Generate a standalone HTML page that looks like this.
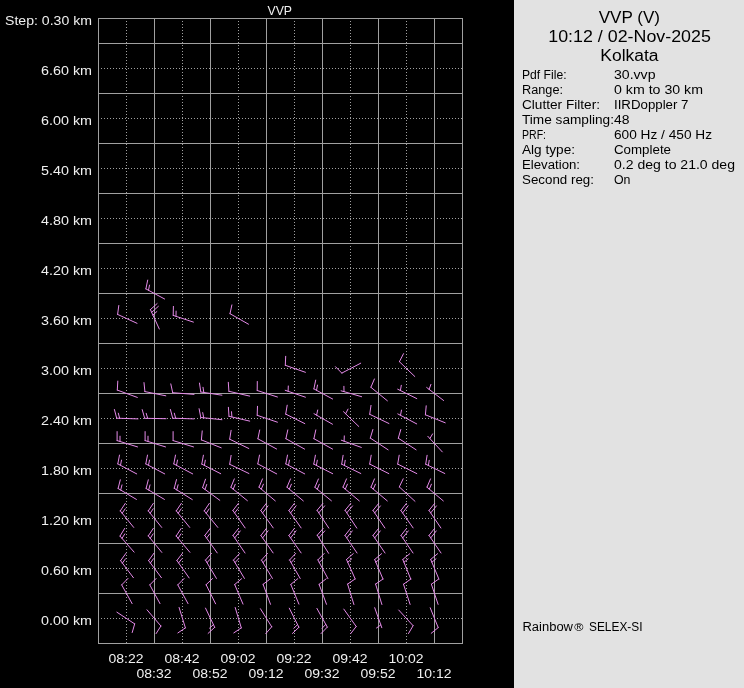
<!DOCTYPE html>
<html><head><meta charset="utf-8"><style>
html,body{margin:0;padding:0;background:#000;}
body{width:744px;height:688px;overflow:hidden;position:relative;}
svg{position:absolute;left:0;top:0;will-change:transform;}
text{font-family:"Liberation Sans",sans-serif;}
</style></head><body>
<svg width="744" height="688" viewBox="0 0 744 688">
<rect x="0" y="0" width="744" height="688" fill="#000"/>
<rect x="514" y="0" width="230" height="688" fill="#e2e2e2"/>
<path d="M98 18.5H463M98 43.5H463M98 93.5H463M98 143.5H463M98 193.5H463M98 243.5H463M98 293.5H463M98 343.5H463M98 393.5H463M98 443.5H463M98 493.5H463M98 543.5H463M98 593.5H463M98 643.5H463M98.5 18V644M154.5 18V644M210.5 18V644M266.5 18V644M322.5 18V644M378.5 18V644M434.5 18V644M462.5 18V644M462.5 18V644" stroke="#a0a0a0" stroke-width="1" fill="none" shape-rendering="crispEdges"/>
<path d="M101 68h1v1h-1zM104 68h1v1h-1zM107 68h1v1h-1zM110 68h1v1h-1zM113 68h1v1h-1zM116 68h1v1h-1zM119 68h1v1h-1zM122 68h1v1h-1zM125 68h1v1h-1zM128 68h1v1h-1zM131 68h1v1h-1zM134 68h1v1h-1zM137 68h1v1h-1zM140 68h1v1h-1zM143 68h1v1h-1zM146 68h1v1h-1zM149 68h1v1h-1zM152 68h1v1h-1zM155 68h1v1h-1zM158 68h1v1h-1zM161 68h1v1h-1zM164 68h1v1h-1zM167 68h1v1h-1zM170 68h1v1h-1zM173 68h1v1h-1zM176 68h1v1h-1zM179 68h1v1h-1zM182 68h1v1h-1zM185 68h1v1h-1zM188 68h1v1h-1zM191 68h1v1h-1zM194 68h1v1h-1zM197 68h1v1h-1zM200 68h1v1h-1zM203 68h1v1h-1zM206 68h1v1h-1zM209 68h1v1h-1zM212 68h1v1h-1zM215 68h1v1h-1zM218 68h1v1h-1zM221 68h1v1h-1zM224 68h1v1h-1zM227 68h1v1h-1zM230 68h1v1h-1zM233 68h1v1h-1zM236 68h1v1h-1zM239 68h1v1h-1zM242 68h1v1h-1zM245 68h1v1h-1zM248 68h1v1h-1zM251 68h1v1h-1zM254 68h1v1h-1zM257 68h1v1h-1zM260 68h1v1h-1zM263 68h1v1h-1zM266 68h1v1h-1zM269 68h1v1h-1zM272 68h1v1h-1zM275 68h1v1h-1zM278 68h1v1h-1zM281 68h1v1h-1zM284 68h1v1h-1zM287 68h1v1h-1zM290 68h1v1h-1zM293 68h1v1h-1zM296 68h1v1h-1zM299 68h1v1h-1zM302 68h1v1h-1zM305 68h1v1h-1zM308 68h1v1h-1zM311 68h1v1h-1zM314 68h1v1h-1zM317 68h1v1h-1zM320 68h1v1h-1zM323 68h1v1h-1zM326 68h1v1h-1zM329 68h1v1h-1zM332 68h1v1h-1zM335 68h1v1h-1zM338 68h1v1h-1zM341 68h1v1h-1zM344 68h1v1h-1zM347 68h1v1h-1zM350 68h1v1h-1zM353 68h1v1h-1zM356 68h1v1h-1zM359 68h1v1h-1zM362 68h1v1h-1zM365 68h1v1h-1zM368 68h1v1h-1zM371 68h1v1h-1zM374 68h1v1h-1zM377 68h1v1h-1zM380 68h1v1h-1zM383 68h1v1h-1zM386 68h1v1h-1zM389 68h1v1h-1zM392 68h1v1h-1zM395 68h1v1h-1zM398 68h1v1h-1zM401 68h1v1h-1zM404 68h1v1h-1zM407 68h1v1h-1zM410 68h1v1h-1zM413 68h1v1h-1zM416 68h1v1h-1zM419 68h1v1h-1zM422 68h1v1h-1zM425 68h1v1h-1zM428 68h1v1h-1zM431 68h1v1h-1zM434 68h1v1h-1zM437 68h1v1h-1zM440 68h1v1h-1zM443 68h1v1h-1zM446 68h1v1h-1zM449 68h1v1h-1zM452 68h1v1h-1zM455 68h1v1h-1zM458 68h1v1h-1zM461 68h1v1h-1zM101 118h1v1h-1zM104 118h1v1h-1zM107 118h1v1h-1zM110 118h1v1h-1zM113 118h1v1h-1zM116 118h1v1h-1zM119 118h1v1h-1zM122 118h1v1h-1zM125 118h1v1h-1zM128 118h1v1h-1zM131 118h1v1h-1zM134 118h1v1h-1zM137 118h1v1h-1zM140 118h1v1h-1zM143 118h1v1h-1zM146 118h1v1h-1zM149 118h1v1h-1zM152 118h1v1h-1zM155 118h1v1h-1zM158 118h1v1h-1zM161 118h1v1h-1zM164 118h1v1h-1zM167 118h1v1h-1zM170 118h1v1h-1zM173 118h1v1h-1zM176 118h1v1h-1zM179 118h1v1h-1zM182 118h1v1h-1zM185 118h1v1h-1zM188 118h1v1h-1zM191 118h1v1h-1zM194 118h1v1h-1zM197 118h1v1h-1zM200 118h1v1h-1zM203 118h1v1h-1zM206 118h1v1h-1zM209 118h1v1h-1zM212 118h1v1h-1zM215 118h1v1h-1zM218 118h1v1h-1zM221 118h1v1h-1zM224 118h1v1h-1zM227 118h1v1h-1zM230 118h1v1h-1zM233 118h1v1h-1zM236 118h1v1h-1zM239 118h1v1h-1zM242 118h1v1h-1zM245 118h1v1h-1zM248 118h1v1h-1zM251 118h1v1h-1zM254 118h1v1h-1zM257 118h1v1h-1zM260 118h1v1h-1zM263 118h1v1h-1zM266 118h1v1h-1zM269 118h1v1h-1zM272 118h1v1h-1zM275 118h1v1h-1zM278 118h1v1h-1zM281 118h1v1h-1zM284 118h1v1h-1zM287 118h1v1h-1zM290 118h1v1h-1zM293 118h1v1h-1zM296 118h1v1h-1zM299 118h1v1h-1zM302 118h1v1h-1zM305 118h1v1h-1zM308 118h1v1h-1zM311 118h1v1h-1zM314 118h1v1h-1zM317 118h1v1h-1zM320 118h1v1h-1zM323 118h1v1h-1zM326 118h1v1h-1zM329 118h1v1h-1zM332 118h1v1h-1zM335 118h1v1h-1zM338 118h1v1h-1zM341 118h1v1h-1zM344 118h1v1h-1zM347 118h1v1h-1zM350 118h1v1h-1zM353 118h1v1h-1zM356 118h1v1h-1zM359 118h1v1h-1zM362 118h1v1h-1zM365 118h1v1h-1zM368 118h1v1h-1zM371 118h1v1h-1zM374 118h1v1h-1zM377 118h1v1h-1zM380 118h1v1h-1zM383 118h1v1h-1zM386 118h1v1h-1zM389 118h1v1h-1zM392 118h1v1h-1zM395 118h1v1h-1zM398 118h1v1h-1zM401 118h1v1h-1zM404 118h1v1h-1zM407 118h1v1h-1zM410 118h1v1h-1zM413 118h1v1h-1zM416 118h1v1h-1zM419 118h1v1h-1zM422 118h1v1h-1zM425 118h1v1h-1zM428 118h1v1h-1zM431 118h1v1h-1zM434 118h1v1h-1zM437 118h1v1h-1zM440 118h1v1h-1zM443 118h1v1h-1zM446 118h1v1h-1zM449 118h1v1h-1zM452 118h1v1h-1zM455 118h1v1h-1zM458 118h1v1h-1zM461 118h1v1h-1zM101 168h1v1h-1zM104 168h1v1h-1zM107 168h1v1h-1zM110 168h1v1h-1zM113 168h1v1h-1zM116 168h1v1h-1zM119 168h1v1h-1zM122 168h1v1h-1zM125 168h1v1h-1zM128 168h1v1h-1zM131 168h1v1h-1zM134 168h1v1h-1zM137 168h1v1h-1zM140 168h1v1h-1zM143 168h1v1h-1zM146 168h1v1h-1zM149 168h1v1h-1zM152 168h1v1h-1zM155 168h1v1h-1zM158 168h1v1h-1zM161 168h1v1h-1zM164 168h1v1h-1zM167 168h1v1h-1zM170 168h1v1h-1zM173 168h1v1h-1zM176 168h1v1h-1zM179 168h1v1h-1zM182 168h1v1h-1zM185 168h1v1h-1zM188 168h1v1h-1zM191 168h1v1h-1zM194 168h1v1h-1zM197 168h1v1h-1zM200 168h1v1h-1zM203 168h1v1h-1zM206 168h1v1h-1zM209 168h1v1h-1zM212 168h1v1h-1zM215 168h1v1h-1zM218 168h1v1h-1zM221 168h1v1h-1zM224 168h1v1h-1zM227 168h1v1h-1zM230 168h1v1h-1zM233 168h1v1h-1zM236 168h1v1h-1zM239 168h1v1h-1zM242 168h1v1h-1zM245 168h1v1h-1zM248 168h1v1h-1zM251 168h1v1h-1zM254 168h1v1h-1zM257 168h1v1h-1zM260 168h1v1h-1zM263 168h1v1h-1zM266 168h1v1h-1zM269 168h1v1h-1zM272 168h1v1h-1zM275 168h1v1h-1zM278 168h1v1h-1zM281 168h1v1h-1zM284 168h1v1h-1zM287 168h1v1h-1zM290 168h1v1h-1zM293 168h1v1h-1zM296 168h1v1h-1zM299 168h1v1h-1zM302 168h1v1h-1zM305 168h1v1h-1zM308 168h1v1h-1zM311 168h1v1h-1zM314 168h1v1h-1zM317 168h1v1h-1zM320 168h1v1h-1zM323 168h1v1h-1zM326 168h1v1h-1zM329 168h1v1h-1zM332 168h1v1h-1zM335 168h1v1h-1zM338 168h1v1h-1zM341 168h1v1h-1zM344 168h1v1h-1zM347 168h1v1h-1zM350 168h1v1h-1zM353 168h1v1h-1zM356 168h1v1h-1zM359 168h1v1h-1zM362 168h1v1h-1zM365 168h1v1h-1zM368 168h1v1h-1zM371 168h1v1h-1zM374 168h1v1h-1zM377 168h1v1h-1zM380 168h1v1h-1zM383 168h1v1h-1zM386 168h1v1h-1zM389 168h1v1h-1zM392 168h1v1h-1zM395 168h1v1h-1zM398 168h1v1h-1zM401 168h1v1h-1zM404 168h1v1h-1zM407 168h1v1h-1zM410 168h1v1h-1zM413 168h1v1h-1zM416 168h1v1h-1zM419 168h1v1h-1zM422 168h1v1h-1zM425 168h1v1h-1zM428 168h1v1h-1zM431 168h1v1h-1zM434 168h1v1h-1zM437 168h1v1h-1zM440 168h1v1h-1zM443 168h1v1h-1zM446 168h1v1h-1zM449 168h1v1h-1zM452 168h1v1h-1zM455 168h1v1h-1zM458 168h1v1h-1zM461 168h1v1h-1zM101 218h1v1h-1zM104 218h1v1h-1zM107 218h1v1h-1zM110 218h1v1h-1zM113 218h1v1h-1zM116 218h1v1h-1zM119 218h1v1h-1zM122 218h1v1h-1zM125 218h1v1h-1zM128 218h1v1h-1zM131 218h1v1h-1zM134 218h1v1h-1zM137 218h1v1h-1zM140 218h1v1h-1zM143 218h1v1h-1zM146 218h1v1h-1zM149 218h1v1h-1zM152 218h1v1h-1zM155 218h1v1h-1zM158 218h1v1h-1zM161 218h1v1h-1zM164 218h1v1h-1zM167 218h1v1h-1zM170 218h1v1h-1zM173 218h1v1h-1zM176 218h1v1h-1zM179 218h1v1h-1zM182 218h1v1h-1zM185 218h1v1h-1zM188 218h1v1h-1zM191 218h1v1h-1zM194 218h1v1h-1zM197 218h1v1h-1zM200 218h1v1h-1zM203 218h1v1h-1zM206 218h1v1h-1zM209 218h1v1h-1zM212 218h1v1h-1zM215 218h1v1h-1zM218 218h1v1h-1zM221 218h1v1h-1zM224 218h1v1h-1zM227 218h1v1h-1zM230 218h1v1h-1zM233 218h1v1h-1zM236 218h1v1h-1zM239 218h1v1h-1zM242 218h1v1h-1zM245 218h1v1h-1zM248 218h1v1h-1zM251 218h1v1h-1zM254 218h1v1h-1zM257 218h1v1h-1zM260 218h1v1h-1zM263 218h1v1h-1zM266 218h1v1h-1zM269 218h1v1h-1zM272 218h1v1h-1zM275 218h1v1h-1zM278 218h1v1h-1zM281 218h1v1h-1zM284 218h1v1h-1zM287 218h1v1h-1zM290 218h1v1h-1zM293 218h1v1h-1zM296 218h1v1h-1zM299 218h1v1h-1zM302 218h1v1h-1zM305 218h1v1h-1zM308 218h1v1h-1zM311 218h1v1h-1zM314 218h1v1h-1zM317 218h1v1h-1zM320 218h1v1h-1zM323 218h1v1h-1zM326 218h1v1h-1zM329 218h1v1h-1zM332 218h1v1h-1zM335 218h1v1h-1zM338 218h1v1h-1zM341 218h1v1h-1zM344 218h1v1h-1zM347 218h1v1h-1zM350 218h1v1h-1zM353 218h1v1h-1zM356 218h1v1h-1zM359 218h1v1h-1zM362 218h1v1h-1zM365 218h1v1h-1zM368 218h1v1h-1zM371 218h1v1h-1zM374 218h1v1h-1zM377 218h1v1h-1zM380 218h1v1h-1zM383 218h1v1h-1zM386 218h1v1h-1zM389 218h1v1h-1zM392 218h1v1h-1zM395 218h1v1h-1zM398 218h1v1h-1zM401 218h1v1h-1zM404 218h1v1h-1zM407 218h1v1h-1zM410 218h1v1h-1zM413 218h1v1h-1zM416 218h1v1h-1zM419 218h1v1h-1zM422 218h1v1h-1zM425 218h1v1h-1zM428 218h1v1h-1zM431 218h1v1h-1zM434 218h1v1h-1zM437 218h1v1h-1zM440 218h1v1h-1zM443 218h1v1h-1zM446 218h1v1h-1zM449 218h1v1h-1zM452 218h1v1h-1zM455 218h1v1h-1zM458 218h1v1h-1zM461 218h1v1h-1zM101 268h1v1h-1zM104 268h1v1h-1zM107 268h1v1h-1zM110 268h1v1h-1zM113 268h1v1h-1zM116 268h1v1h-1zM119 268h1v1h-1zM122 268h1v1h-1zM125 268h1v1h-1zM128 268h1v1h-1zM131 268h1v1h-1zM134 268h1v1h-1zM137 268h1v1h-1zM140 268h1v1h-1zM143 268h1v1h-1zM146 268h1v1h-1zM149 268h1v1h-1zM152 268h1v1h-1zM155 268h1v1h-1zM158 268h1v1h-1zM161 268h1v1h-1zM164 268h1v1h-1zM167 268h1v1h-1zM170 268h1v1h-1zM173 268h1v1h-1zM176 268h1v1h-1zM179 268h1v1h-1zM182 268h1v1h-1zM185 268h1v1h-1zM188 268h1v1h-1zM191 268h1v1h-1zM194 268h1v1h-1zM197 268h1v1h-1zM200 268h1v1h-1zM203 268h1v1h-1zM206 268h1v1h-1zM209 268h1v1h-1zM212 268h1v1h-1zM215 268h1v1h-1zM218 268h1v1h-1zM221 268h1v1h-1zM224 268h1v1h-1zM227 268h1v1h-1zM230 268h1v1h-1zM233 268h1v1h-1zM236 268h1v1h-1zM239 268h1v1h-1zM242 268h1v1h-1zM245 268h1v1h-1zM248 268h1v1h-1zM251 268h1v1h-1zM254 268h1v1h-1zM257 268h1v1h-1zM260 268h1v1h-1zM263 268h1v1h-1zM266 268h1v1h-1zM269 268h1v1h-1zM272 268h1v1h-1zM275 268h1v1h-1zM278 268h1v1h-1zM281 268h1v1h-1zM284 268h1v1h-1zM287 268h1v1h-1zM290 268h1v1h-1zM293 268h1v1h-1zM296 268h1v1h-1zM299 268h1v1h-1zM302 268h1v1h-1zM305 268h1v1h-1zM308 268h1v1h-1zM311 268h1v1h-1zM314 268h1v1h-1zM317 268h1v1h-1zM320 268h1v1h-1zM323 268h1v1h-1zM326 268h1v1h-1zM329 268h1v1h-1zM332 268h1v1h-1zM335 268h1v1h-1zM338 268h1v1h-1zM341 268h1v1h-1zM344 268h1v1h-1zM347 268h1v1h-1zM350 268h1v1h-1zM353 268h1v1h-1zM356 268h1v1h-1zM359 268h1v1h-1zM362 268h1v1h-1zM365 268h1v1h-1zM368 268h1v1h-1zM371 268h1v1h-1zM374 268h1v1h-1zM377 268h1v1h-1zM380 268h1v1h-1zM383 268h1v1h-1zM386 268h1v1h-1zM389 268h1v1h-1zM392 268h1v1h-1zM395 268h1v1h-1zM398 268h1v1h-1zM401 268h1v1h-1zM404 268h1v1h-1zM407 268h1v1h-1zM410 268h1v1h-1zM413 268h1v1h-1zM416 268h1v1h-1zM419 268h1v1h-1zM422 268h1v1h-1zM425 268h1v1h-1zM428 268h1v1h-1zM431 268h1v1h-1zM434 268h1v1h-1zM437 268h1v1h-1zM440 268h1v1h-1zM443 268h1v1h-1zM446 268h1v1h-1zM449 268h1v1h-1zM452 268h1v1h-1zM455 268h1v1h-1zM458 268h1v1h-1zM461 268h1v1h-1zM101 318h1v1h-1zM104 318h1v1h-1zM107 318h1v1h-1zM110 318h1v1h-1zM113 318h1v1h-1zM116 318h1v1h-1zM119 318h1v1h-1zM122 318h1v1h-1zM125 318h1v1h-1zM128 318h1v1h-1zM131 318h1v1h-1zM134 318h1v1h-1zM137 318h1v1h-1zM140 318h1v1h-1zM143 318h1v1h-1zM146 318h1v1h-1zM149 318h1v1h-1zM152 318h1v1h-1zM155 318h1v1h-1zM158 318h1v1h-1zM161 318h1v1h-1zM164 318h1v1h-1zM167 318h1v1h-1zM170 318h1v1h-1zM173 318h1v1h-1zM176 318h1v1h-1zM179 318h1v1h-1zM182 318h1v1h-1zM185 318h1v1h-1zM188 318h1v1h-1zM191 318h1v1h-1zM194 318h1v1h-1zM197 318h1v1h-1zM200 318h1v1h-1zM203 318h1v1h-1zM206 318h1v1h-1zM209 318h1v1h-1zM212 318h1v1h-1zM215 318h1v1h-1zM218 318h1v1h-1zM221 318h1v1h-1zM224 318h1v1h-1zM227 318h1v1h-1zM230 318h1v1h-1zM233 318h1v1h-1zM236 318h1v1h-1zM239 318h1v1h-1zM242 318h1v1h-1zM245 318h1v1h-1zM248 318h1v1h-1zM251 318h1v1h-1zM254 318h1v1h-1zM257 318h1v1h-1zM260 318h1v1h-1zM263 318h1v1h-1zM266 318h1v1h-1zM269 318h1v1h-1zM272 318h1v1h-1zM275 318h1v1h-1zM278 318h1v1h-1zM281 318h1v1h-1zM284 318h1v1h-1zM287 318h1v1h-1zM290 318h1v1h-1zM293 318h1v1h-1zM296 318h1v1h-1zM299 318h1v1h-1zM302 318h1v1h-1zM305 318h1v1h-1zM308 318h1v1h-1zM311 318h1v1h-1zM314 318h1v1h-1zM317 318h1v1h-1zM320 318h1v1h-1zM323 318h1v1h-1zM326 318h1v1h-1zM329 318h1v1h-1zM332 318h1v1h-1zM335 318h1v1h-1zM338 318h1v1h-1zM341 318h1v1h-1zM344 318h1v1h-1zM347 318h1v1h-1zM350 318h1v1h-1zM353 318h1v1h-1zM356 318h1v1h-1zM359 318h1v1h-1zM362 318h1v1h-1zM365 318h1v1h-1zM368 318h1v1h-1zM371 318h1v1h-1zM374 318h1v1h-1zM377 318h1v1h-1zM380 318h1v1h-1zM383 318h1v1h-1zM386 318h1v1h-1zM389 318h1v1h-1zM392 318h1v1h-1zM395 318h1v1h-1zM398 318h1v1h-1zM401 318h1v1h-1zM404 318h1v1h-1zM407 318h1v1h-1zM410 318h1v1h-1zM413 318h1v1h-1zM416 318h1v1h-1zM419 318h1v1h-1zM422 318h1v1h-1zM425 318h1v1h-1zM428 318h1v1h-1zM431 318h1v1h-1zM434 318h1v1h-1zM437 318h1v1h-1zM440 318h1v1h-1zM443 318h1v1h-1zM446 318h1v1h-1zM449 318h1v1h-1zM452 318h1v1h-1zM455 318h1v1h-1zM458 318h1v1h-1zM461 318h1v1h-1zM101 368h1v1h-1zM104 368h1v1h-1zM107 368h1v1h-1zM110 368h1v1h-1zM113 368h1v1h-1zM116 368h1v1h-1zM119 368h1v1h-1zM122 368h1v1h-1zM125 368h1v1h-1zM128 368h1v1h-1zM131 368h1v1h-1zM134 368h1v1h-1zM137 368h1v1h-1zM140 368h1v1h-1zM143 368h1v1h-1zM146 368h1v1h-1zM149 368h1v1h-1zM152 368h1v1h-1zM155 368h1v1h-1zM158 368h1v1h-1zM161 368h1v1h-1zM164 368h1v1h-1zM167 368h1v1h-1zM170 368h1v1h-1zM173 368h1v1h-1zM176 368h1v1h-1zM179 368h1v1h-1zM182 368h1v1h-1zM185 368h1v1h-1zM188 368h1v1h-1zM191 368h1v1h-1zM194 368h1v1h-1zM197 368h1v1h-1zM200 368h1v1h-1zM203 368h1v1h-1zM206 368h1v1h-1zM209 368h1v1h-1zM212 368h1v1h-1zM215 368h1v1h-1zM218 368h1v1h-1zM221 368h1v1h-1zM224 368h1v1h-1zM227 368h1v1h-1zM230 368h1v1h-1zM233 368h1v1h-1zM236 368h1v1h-1zM239 368h1v1h-1zM242 368h1v1h-1zM245 368h1v1h-1zM248 368h1v1h-1zM251 368h1v1h-1zM254 368h1v1h-1zM257 368h1v1h-1zM260 368h1v1h-1zM263 368h1v1h-1zM266 368h1v1h-1zM269 368h1v1h-1zM272 368h1v1h-1zM275 368h1v1h-1zM278 368h1v1h-1zM281 368h1v1h-1zM284 368h1v1h-1zM287 368h1v1h-1zM290 368h1v1h-1zM293 368h1v1h-1zM296 368h1v1h-1zM299 368h1v1h-1zM302 368h1v1h-1zM305 368h1v1h-1zM308 368h1v1h-1zM311 368h1v1h-1zM314 368h1v1h-1zM317 368h1v1h-1zM320 368h1v1h-1zM323 368h1v1h-1zM326 368h1v1h-1zM329 368h1v1h-1zM332 368h1v1h-1zM335 368h1v1h-1zM338 368h1v1h-1zM341 368h1v1h-1zM344 368h1v1h-1zM347 368h1v1h-1zM350 368h1v1h-1zM353 368h1v1h-1zM356 368h1v1h-1zM359 368h1v1h-1zM362 368h1v1h-1zM365 368h1v1h-1zM368 368h1v1h-1zM371 368h1v1h-1zM374 368h1v1h-1zM377 368h1v1h-1zM380 368h1v1h-1zM383 368h1v1h-1zM386 368h1v1h-1zM389 368h1v1h-1zM392 368h1v1h-1zM395 368h1v1h-1zM398 368h1v1h-1zM401 368h1v1h-1zM404 368h1v1h-1zM407 368h1v1h-1zM410 368h1v1h-1zM413 368h1v1h-1zM416 368h1v1h-1zM419 368h1v1h-1zM422 368h1v1h-1zM425 368h1v1h-1zM428 368h1v1h-1zM431 368h1v1h-1zM434 368h1v1h-1zM437 368h1v1h-1zM440 368h1v1h-1zM443 368h1v1h-1zM446 368h1v1h-1zM449 368h1v1h-1zM452 368h1v1h-1zM455 368h1v1h-1zM458 368h1v1h-1zM461 368h1v1h-1zM101 418h1v1h-1zM104 418h1v1h-1zM107 418h1v1h-1zM110 418h1v1h-1zM113 418h1v1h-1zM116 418h1v1h-1zM119 418h1v1h-1zM122 418h1v1h-1zM125 418h1v1h-1zM128 418h1v1h-1zM131 418h1v1h-1zM134 418h1v1h-1zM137 418h1v1h-1zM140 418h1v1h-1zM143 418h1v1h-1zM146 418h1v1h-1zM149 418h1v1h-1zM152 418h1v1h-1zM155 418h1v1h-1zM158 418h1v1h-1zM161 418h1v1h-1zM164 418h1v1h-1zM167 418h1v1h-1zM170 418h1v1h-1zM173 418h1v1h-1zM176 418h1v1h-1zM179 418h1v1h-1zM182 418h1v1h-1zM185 418h1v1h-1zM188 418h1v1h-1zM191 418h1v1h-1zM194 418h1v1h-1zM197 418h1v1h-1zM200 418h1v1h-1zM203 418h1v1h-1zM206 418h1v1h-1zM209 418h1v1h-1zM212 418h1v1h-1zM215 418h1v1h-1zM218 418h1v1h-1zM221 418h1v1h-1zM224 418h1v1h-1zM227 418h1v1h-1zM230 418h1v1h-1zM233 418h1v1h-1zM236 418h1v1h-1zM239 418h1v1h-1zM242 418h1v1h-1zM245 418h1v1h-1zM248 418h1v1h-1zM251 418h1v1h-1zM254 418h1v1h-1zM257 418h1v1h-1zM260 418h1v1h-1zM263 418h1v1h-1zM266 418h1v1h-1zM269 418h1v1h-1zM272 418h1v1h-1zM275 418h1v1h-1zM278 418h1v1h-1zM281 418h1v1h-1zM284 418h1v1h-1zM287 418h1v1h-1zM290 418h1v1h-1zM293 418h1v1h-1zM296 418h1v1h-1zM299 418h1v1h-1zM302 418h1v1h-1zM305 418h1v1h-1zM308 418h1v1h-1zM311 418h1v1h-1zM314 418h1v1h-1zM317 418h1v1h-1zM320 418h1v1h-1zM323 418h1v1h-1zM326 418h1v1h-1zM329 418h1v1h-1zM332 418h1v1h-1zM335 418h1v1h-1zM338 418h1v1h-1zM341 418h1v1h-1zM344 418h1v1h-1zM347 418h1v1h-1zM350 418h1v1h-1zM353 418h1v1h-1zM356 418h1v1h-1zM359 418h1v1h-1zM362 418h1v1h-1zM365 418h1v1h-1zM368 418h1v1h-1zM371 418h1v1h-1zM374 418h1v1h-1zM377 418h1v1h-1zM380 418h1v1h-1zM383 418h1v1h-1zM386 418h1v1h-1zM389 418h1v1h-1zM392 418h1v1h-1zM395 418h1v1h-1zM398 418h1v1h-1zM401 418h1v1h-1zM404 418h1v1h-1zM407 418h1v1h-1zM410 418h1v1h-1zM413 418h1v1h-1zM416 418h1v1h-1zM419 418h1v1h-1zM422 418h1v1h-1zM425 418h1v1h-1zM428 418h1v1h-1zM431 418h1v1h-1zM434 418h1v1h-1zM437 418h1v1h-1zM440 418h1v1h-1zM443 418h1v1h-1zM446 418h1v1h-1zM449 418h1v1h-1zM452 418h1v1h-1zM455 418h1v1h-1zM458 418h1v1h-1zM461 418h1v1h-1zM101 468h1v1h-1zM104 468h1v1h-1zM107 468h1v1h-1zM110 468h1v1h-1zM113 468h1v1h-1zM116 468h1v1h-1zM119 468h1v1h-1zM122 468h1v1h-1zM125 468h1v1h-1zM128 468h1v1h-1zM131 468h1v1h-1zM134 468h1v1h-1zM137 468h1v1h-1zM140 468h1v1h-1zM143 468h1v1h-1zM146 468h1v1h-1zM149 468h1v1h-1zM152 468h1v1h-1zM155 468h1v1h-1zM158 468h1v1h-1zM161 468h1v1h-1zM164 468h1v1h-1zM167 468h1v1h-1zM170 468h1v1h-1zM173 468h1v1h-1zM176 468h1v1h-1zM179 468h1v1h-1zM182 468h1v1h-1zM185 468h1v1h-1zM188 468h1v1h-1zM191 468h1v1h-1zM194 468h1v1h-1zM197 468h1v1h-1zM200 468h1v1h-1zM203 468h1v1h-1zM206 468h1v1h-1zM209 468h1v1h-1zM212 468h1v1h-1zM215 468h1v1h-1zM218 468h1v1h-1zM221 468h1v1h-1zM224 468h1v1h-1zM227 468h1v1h-1zM230 468h1v1h-1zM233 468h1v1h-1zM236 468h1v1h-1zM239 468h1v1h-1zM242 468h1v1h-1zM245 468h1v1h-1zM248 468h1v1h-1zM251 468h1v1h-1zM254 468h1v1h-1zM257 468h1v1h-1zM260 468h1v1h-1zM263 468h1v1h-1zM266 468h1v1h-1zM269 468h1v1h-1zM272 468h1v1h-1zM275 468h1v1h-1zM278 468h1v1h-1zM281 468h1v1h-1zM284 468h1v1h-1zM287 468h1v1h-1zM290 468h1v1h-1zM293 468h1v1h-1zM296 468h1v1h-1zM299 468h1v1h-1zM302 468h1v1h-1zM305 468h1v1h-1zM308 468h1v1h-1zM311 468h1v1h-1zM314 468h1v1h-1zM317 468h1v1h-1zM320 468h1v1h-1zM323 468h1v1h-1zM326 468h1v1h-1zM329 468h1v1h-1zM332 468h1v1h-1zM335 468h1v1h-1zM338 468h1v1h-1zM341 468h1v1h-1zM344 468h1v1h-1zM347 468h1v1h-1zM350 468h1v1h-1zM353 468h1v1h-1zM356 468h1v1h-1zM359 468h1v1h-1zM362 468h1v1h-1zM365 468h1v1h-1zM368 468h1v1h-1zM371 468h1v1h-1zM374 468h1v1h-1zM377 468h1v1h-1zM380 468h1v1h-1zM383 468h1v1h-1zM386 468h1v1h-1zM389 468h1v1h-1zM392 468h1v1h-1zM395 468h1v1h-1zM398 468h1v1h-1zM401 468h1v1h-1zM404 468h1v1h-1zM407 468h1v1h-1zM410 468h1v1h-1zM413 468h1v1h-1zM416 468h1v1h-1zM419 468h1v1h-1zM422 468h1v1h-1zM425 468h1v1h-1zM428 468h1v1h-1zM431 468h1v1h-1zM434 468h1v1h-1zM437 468h1v1h-1zM440 468h1v1h-1zM443 468h1v1h-1zM446 468h1v1h-1zM449 468h1v1h-1zM452 468h1v1h-1zM455 468h1v1h-1zM458 468h1v1h-1zM461 468h1v1h-1zM101 518h1v1h-1zM104 518h1v1h-1zM107 518h1v1h-1zM110 518h1v1h-1zM113 518h1v1h-1zM116 518h1v1h-1zM119 518h1v1h-1zM122 518h1v1h-1zM125 518h1v1h-1zM128 518h1v1h-1zM131 518h1v1h-1zM134 518h1v1h-1zM137 518h1v1h-1zM140 518h1v1h-1zM143 518h1v1h-1zM146 518h1v1h-1zM149 518h1v1h-1zM152 518h1v1h-1zM155 518h1v1h-1zM158 518h1v1h-1zM161 518h1v1h-1zM164 518h1v1h-1zM167 518h1v1h-1zM170 518h1v1h-1zM173 518h1v1h-1zM176 518h1v1h-1zM179 518h1v1h-1zM182 518h1v1h-1zM185 518h1v1h-1zM188 518h1v1h-1zM191 518h1v1h-1zM194 518h1v1h-1zM197 518h1v1h-1zM200 518h1v1h-1zM203 518h1v1h-1zM206 518h1v1h-1zM209 518h1v1h-1zM212 518h1v1h-1zM215 518h1v1h-1zM218 518h1v1h-1zM221 518h1v1h-1zM224 518h1v1h-1zM227 518h1v1h-1zM230 518h1v1h-1zM233 518h1v1h-1zM236 518h1v1h-1zM239 518h1v1h-1zM242 518h1v1h-1zM245 518h1v1h-1zM248 518h1v1h-1zM251 518h1v1h-1zM254 518h1v1h-1zM257 518h1v1h-1zM260 518h1v1h-1zM263 518h1v1h-1zM266 518h1v1h-1zM269 518h1v1h-1zM272 518h1v1h-1zM275 518h1v1h-1zM278 518h1v1h-1zM281 518h1v1h-1zM284 518h1v1h-1zM287 518h1v1h-1zM290 518h1v1h-1zM293 518h1v1h-1zM296 518h1v1h-1zM299 518h1v1h-1zM302 518h1v1h-1zM305 518h1v1h-1zM308 518h1v1h-1zM311 518h1v1h-1zM314 518h1v1h-1zM317 518h1v1h-1zM320 518h1v1h-1zM323 518h1v1h-1zM326 518h1v1h-1zM329 518h1v1h-1zM332 518h1v1h-1zM335 518h1v1h-1zM338 518h1v1h-1zM341 518h1v1h-1zM344 518h1v1h-1zM347 518h1v1h-1zM350 518h1v1h-1zM353 518h1v1h-1zM356 518h1v1h-1zM359 518h1v1h-1zM362 518h1v1h-1zM365 518h1v1h-1zM368 518h1v1h-1zM371 518h1v1h-1zM374 518h1v1h-1zM377 518h1v1h-1zM380 518h1v1h-1zM383 518h1v1h-1zM386 518h1v1h-1zM389 518h1v1h-1zM392 518h1v1h-1zM395 518h1v1h-1zM398 518h1v1h-1zM401 518h1v1h-1zM404 518h1v1h-1zM407 518h1v1h-1zM410 518h1v1h-1zM413 518h1v1h-1zM416 518h1v1h-1zM419 518h1v1h-1zM422 518h1v1h-1zM425 518h1v1h-1zM428 518h1v1h-1zM431 518h1v1h-1zM434 518h1v1h-1zM437 518h1v1h-1zM440 518h1v1h-1zM443 518h1v1h-1zM446 518h1v1h-1zM449 518h1v1h-1zM452 518h1v1h-1zM455 518h1v1h-1zM458 518h1v1h-1zM461 518h1v1h-1zM101 568h1v1h-1zM104 568h1v1h-1zM107 568h1v1h-1zM110 568h1v1h-1zM113 568h1v1h-1zM116 568h1v1h-1zM119 568h1v1h-1zM122 568h1v1h-1zM125 568h1v1h-1zM128 568h1v1h-1zM131 568h1v1h-1zM134 568h1v1h-1zM137 568h1v1h-1zM140 568h1v1h-1zM143 568h1v1h-1zM146 568h1v1h-1zM149 568h1v1h-1zM152 568h1v1h-1zM155 568h1v1h-1zM158 568h1v1h-1zM161 568h1v1h-1zM164 568h1v1h-1zM167 568h1v1h-1zM170 568h1v1h-1zM173 568h1v1h-1zM176 568h1v1h-1zM179 568h1v1h-1zM182 568h1v1h-1zM185 568h1v1h-1zM188 568h1v1h-1zM191 568h1v1h-1zM194 568h1v1h-1zM197 568h1v1h-1zM200 568h1v1h-1zM203 568h1v1h-1zM206 568h1v1h-1zM209 568h1v1h-1zM212 568h1v1h-1zM215 568h1v1h-1zM218 568h1v1h-1zM221 568h1v1h-1zM224 568h1v1h-1zM227 568h1v1h-1zM230 568h1v1h-1zM233 568h1v1h-1zM236 568h1v1h-1zM239 568h1v1h-1zM242 568h1v1h-1zM245 568h1v1h-1zM248 568h1v1h-1zM251 568h1v1h-1zM254 568h1v1h-1zM257 568h1v1h-1zM260 568h1v1h-1zM263 568h1v1h-1zM266 568h1v1h-1zM269 568h1v1h-1zM272 568h1v1h-1zM275 568h1v1h-1zM278 568h1v1h-1zM281 568h1v1h-1zM284 568h1v1h-1zM287 568h1v1h-1zM290 568h1v1h-1zM293 568h1v1h-1zM296 568h1v1h-1zM299 568h1v1h-1zM302 568h1v1h-1zM305 568h1v1h-1zM308 568h1v1h-1zM311 568h1v1h-1zM314 568h1v1h-1zM317 568h1v1h-1zM320 568h1v1h-1zM323 568h1v1h-1zM326 568h1v1h-1zM329 568h1v1h-1zM332 568h1v1h-1zM335 568h1v1h-1zM338 568h1v1h-1zM341 568h1v1h-1zM344 568h1v1h-1zM347 568h1v1h-1zM350 568h1v1h-1zM353 568h1v1h-1zM356 568h1v1h-1zM359 568h1v1h-1zM362 568h1v1h-1zM365 568h1v1h-1zM368 568h1v1h-1zM371 568h1v1h-1zM374 568h1v1h-1zM377 568h1v1h-1zM380 568h1v1h-1zM383 568h1v1h-1zM386 568h1v1h-1zM389 568h1v1h-1zM392 568h1v1h-1zM395 568h1v1h-1zM398 568h1v1h-1zM401 568h1v1h-1zM404 568h1v1h-1zM407 568h1v1h-1zM410 568h1v1h-1zM413 568h1v1h-1zM416 568h1v1h-1zM419 568h1v1h-1zM422 568h1v1h-1zM425 568h1v1h-1zM428 568h1v1h-1zM431 568h1v1h-1zM434 568h1v1h-1zM437 568h1v1h-1zM440 568h1v1h-1zM443 568h1v1h-1zM446 568h1v1h-1zM449 568h1v1h-1zM452 568h1v1h-1zM455 568h1v1h-1zM458 568h1v1h-1zM461 568h1v1h-1zM101 618h1v1h-1zM104 618h1v1h-1zM107 618h1v1h-1zM110 618h1v1h-1zM113 618h1v1h-1zM116 618h1v1h-1zM119 618h1v1h-1zM122 618h1v1h-1zM125 618h1v1h-1zM128 618h1v1h-1zM131 618h1v1h-1zM134 618h1v1h-1zM137 618h1v1h-1zM140 618h1v1h-1zM143 618h1v1h-1zM146 618h1v1h-1zM149 618h1v1h-1zM152 618h1v1h-1zM155 618h1v1h-1zM158 618h1v1h-1zM161 618h1v1h-1zM164 618h1v1h-1zM167 618h1v1h-1zM170 618h1v1h-1zM173 618h1v1h-1zM176 618h1v1h-1zM179 618h1v1h-1zM182 618h1v1h-1zM185 618h1v1h-1zM188 618h1v1h-1zM191 618h1v1h-1zM194 618h1v1h-1zM197 618h1v1h-1zM200 618h1v1h-1zM203 618h1v1h-1zM206 618h1v1h-1zM209 618h1v1h-1zM212 618h1v1h-1zM215 618h1v1h-1zM218 618h1v1h-1zM221 618h1v1h-1zM224 618h1v1h-1zM227 618h1v1h-1zM230 618h1v1h-1zM233 618h1v1h-1zM236 618h1v1h-1zM239 618h1v1h-1zM242 618h1v1h-1zM245 618h1v1h-1zM248 618h1v1h-1zM251 618h1v1h-1zM254 618h1v1h-1zM257 618h1v1h-1zM260 618h1v1h-1zM263 618h1v1h-1zM266 618h1v1h-1zM269 618h1v1h-1zM272 618h1v1h-1zM275 618h1v1h-1zM278 618h1v1h-1zM281 618h1v1h-1zM284 618h1v1h-1zM287 618h1v1h-1zM290 618h1v1h-1zM293 618h1v1h-1zM296 618h1v1h-1zM299 618h1v1h-1zM302 618h1v1h-1zM305 618h1v1h-1zM308 618h1v1h-1zM311 618h1v1h-1zM314 618h1v1h-1zM317 618h1v1h-1zM320 618h1v1h-1zM323 618h1v1h-1zM326 618h1v1h-1zM329 618h1v1h-1zM332 618h1v1h-1zM335 618h1v1h-1zM338 618h1v1h-1zM341 618h1v1h-1zM344 618h1v1h-1zM347 618h1v1h-1zM350 618h1v1h-1zM353 618h1v1h-1zM356 618h1v1h-1zM359 618h1v1h-1zM362 618h1v1h-1zM365 618h1v1h-1zM368 618h1v1h-1zM371 618h1v1h-1zM374 618h1v1h-1zM377 618h1v1h-1zM380 618h1v1h-1zM383 618h1v1h-1zM386 618h1v1h-1zM389 618h1v1h-1zM392 618h1v1h-1zM395 618h1v1h-1zM398 618h1v1h-1zM401 618h1v1h-1zM404 618h1v1h-1zM407 618h1v1h-1zM410 618h1v1h-1zM413 618h1v1h-1zM416 618h1v1h-1zM419 618h1v1h-1zM422 618h1v1h-1zM425 618h1v1h-1zM428 618h1v1h-1zM431 618h1v1h-1zM434 618h1v1h-1zM437 618h1v1h-1zM440 618h1v1h-1zM443 618h1v1h-1zM446 618h1v1h-1zM449 618h1v1h-1zM452 618h1v1h-1zM455 618h1v1h-1zM458 618h1v1h-1zM461 618h1v1h-1zM126 21h1v1h-1zM126 24h1v1h-1zM126 27h1v1h-1zM126 30h1v1h-1zM126 33h1v1h-1zM126 36h1v1h-1zM126 39h1v1h-1zM126 42h1v1h-1zM126 45h1v1h-1zM126 48h1v1h-1zM126 51h1v1h-1zM126 54h1v1h-1zM126 57h1v1h-1zM126 60h1v1h-1zM126 63h1v1h-1zM126 66h1v1h-1zM126 69h1v1h-1zM126 72h1v1h-1zM126 75h1v1h-1zM126 78h1v1h-1zM126 81h1v1h-1zM126 84h1v1h-1zM126 87h1v1h-1zM126 90h1v1h-1zM126 93h1v1h-1zM126 96h1v1h-1zM126 99h1v1h-1zM126 102h1v1h-1zM126 105h1v1h-1zM126 108h1v1h-1zM126 111h1v1h-1zM126 114h1v1h-1zM126 117h1v1h-1zM126 120h1v1h-1zM126 123h1v1h-1zM126 126h1v1h-1zM126 129h1v1h-1zM126 132h1v1h-1zM126 135h1v1h-1zM126 138h1v1h-1zM126 141h1v1h-1zM126 144h1v1h-1zM126 147h1v1h-1zM126 150h1v1h-1zM126 153h1v1h-1zM126 156h1v1h-1zM126 159h1v1h-1zM126 162h1v1h-1zM126 165h1v1h-1zM126 168h1v1h-1zM126 171h1v1h-1zM126 174h1v1h-1zM126 177h1v1h-1zM126 180h1v1h-1zM126 183h1v1h-1zM126 186h1v1h-1zM126 189h1v1h-1zM126 192h1v1h-1zM126 195h1v1h-1zM126 198h1v1h-1zM126 201h1v1h-1zM126 204h1v1h-1zM126 207h1v1h-1zM126 210h1v1h-1zM126 213h1v1h-1zM126 216h1v1h-1zM126 219h1v1h-1zM126 222h1v1h-1zM126 225h1v1h-1zM126 228h1v1h-1zM126 231h1v1h-1zM126 234h1v1h-1zM126 237h1v1h-1zM126 240h1v1h-1zM126 243h1v1h-1zM126 246h1v1h-1zM126 249h1v1h-1zM126 252h1v1h-1zM126 255h1v1h-1zM126 258h1v1h-1zM126 261h1v1h-1zM126 264h1v1h-1zM126 267h1v1h-1zM126 270h1v1h-1zM126 273h1v1h-1zM126 276h1v1h-1zM126 279h1v1h-1zM126 282h1v1h-1zM126 285h1v1h-1zM126 288h1v1h-1zM126 291h1v1h-1zM126 294h1v1h-1zM126 297h1v1h-1zM126 300h1v1h-1zM126 303h1v1h-1zM126 306h1v1h-1zM126 309h1v1h-1zM126 312h1v1h-1zM126 315h1v1h-1zM126 318h1v1h-1zM126 321h1v1h-1zM126 324h1v1h-1zM126 327h1v1h-1zM126 330h1v1h-1zM126 333h1v1h-1zM126 336h1v1h-1zM126 339h1v1h-1zM126 342h1v1h-1zM126 345h1v1h-1zM126 348h1v1h-1zM126 351h1v1h-1zM126 354h1v1h-1zM126 357h1v1h-1zM126 360h1v1h-1zM126 363h1v1h-1zM126 366h1v1h-1zM126 369h1v1h-1zM126 372h1v1h-1zM126 375h1v1h-1zM126 378h1v1h-1zM126 381h1v1h-1zM126 384h1v1h-1zM126 387h1v1h-1zM126 390h1v1h-1zM126 393h1v1h-1zM126 396h1v1h-1zM126 399h1v1h-1zM126 402h1v1h-1zM126 405h1v1h-1zM126 408h1v1h-1zM126 411h1v1h-1zM126 414h1v1h-1zM126 417h1v1h-1zM126 420h1v1h-1zM126 423h1v1h-1zM126 426h1v1h-1zM126 429h1v1h-1zM126 432h1v1h-1zM126 435h1v1h-1zM126 438h1v1h-1zM126 441h1v1h-1zM126 444h1v1h-1zM126 447h1v1h-1zM126 450h1v1h-1zM126 453h1v1h-1zM126 456h1v1h-1zM126 459h1v1h-1zM126 462h1v1h-1zM126 465h1v1h-1zM126 468h1v1h-1zM126 471h1v1h-1zM126 474h1v1h-1zM126 477h1v1h-1zM126 480h1v1h-1zM126 483h1v1h-1zM126 486h1v1h-1zM126 489h1v1h-1zM126 492h1v1h-1zM126 495h1v1h-1zM126 498h1v1h-1zM126 501h1v1h-1zM126 504h1v1h-1zM126 507h1v1h-1zM126 510h1v1h-1zM126 513h1v1h-1zM126 516h1v1h-1zM126 519h1v1h-1zM126 522h1v1h-1zM126 525h1v1h-1zM126 528h1v1h-1zM126 531h1v1h-1zM126 534h1v1h-1zM126 537h1v1h-1zM126 540h1v1h-1zM126 543h1v1h-1zM126 546h1v1h-1zM126 549h1v1h-1zM126 552h1v1h-1zM126 555h1v1h-1zM126 558h1v1h-1zM126 561h1v1h-1zM126 564h1v1h-1zM126 567h1v1h-1zM126 570h1v1h-1zM126 573h1v1h-1zM126 576h1v1h-1zM126 579h1v1h-1zM126 582h1v1h-1zM126 585h1v1h-1zM126 588h1v1h-1zM126 591h1v1h-1zM126 594h1v1h-1zM126 597h1v1h-1zM126 600h1v1h-1zM126 603h1v1h-1zM126 606h1v1h-1zM126 609h1v1h-1zM126 612h1v1h-1zM126 615h1v1h-1zM126 618h1v1h-1zM126 621h1v1h-1zM126 624h1v1h-1zM126 627h1v1h-1zM126 630h1v1h-1zM126 633h1v1h-1zM126 636h1v1h-1zM126 639h1v1h-1zM126 642h1v1h-1zM182 21h1v1h-1zM182 24h1v1h-1zM182 27h1v1h-1zM182 30h1v1h-1zM182 33h1v1h-1zM182 36h1v1h-1zM182 39h1v1h-1zM182 42h1v1h-1zM182 45h1v1h-1zM182 48h1v1h-1zM182 51h1v1h-1zM182 54h1v1h-1zM182 57h1v1h-1zM182 60h1v1h-1zM182 63h1v1h-1zM182 66h1v1h-1zM182 69h1v1h-1zM182 72h1v1h-1zM182 75h1v1h-1zM182 78h1v1h-1zM182 81h1v1h-1zM182 84h1v1h-1zM182 87h1v1h-1zM182 90h1v1h-1zM182 93h1v1h-1zM182 96h1v1h-1zM182 99h1v1h-1zM182 102h1v1h-1zM182 105h1v1h-1zM182 108h1v1h-1zM182 111h1v1h-1zM182 114h1v1h-1zM182 117h1v1h-1zM182 120h1v1h-1zM182 123h1v1h-1zM182 126h1v1h-1zM182 129h1v1h-1zM182 132h1v1h-1zM182 135h1v1h-1zM182 138h1v1h-1zM182 141h1v1h-1zM182 144h1v1h-1zM182 147h1v1h-1zM182 150h1v1h-1zM182 153h1v1h-1zM182 156h1v1h-1zM182 159h1v1h-1zM182 162h1v1h-1zM182 165h1v1h-1zM182 168h1v1h-1zM182 171h1v1h-1zM182 174h1v1h-1zM182 177h1v1h-1zM182 180h1v1h-1zM182 183h1v1h-1zM182 186h1v1h-1zM182 189h1v1h-1zM182 192h1v1h-1zM182 195h1v1h-1zM182 198h1v1h-1zM182 201h1v1h-1zM182 204h1v1h-1zM182 207h1v1h-1zM182 210h1v1h-1zM182 213h1v1h-1zM182 216h1v1h-1zM182 219h1v1h-1zM182 222h1v1h-1zM182 225h1v1h-1zM182 228h1v1h-1zM182 231h1v1h-1zM182 234h1v1h-1zM182 237h1v1h-1zM182 240h1v1h-1zM182 243h1v1h-1zM182 246h1v1h-1zM182 249h1v1h-1zM182 252h1v1h-1zM182 255h1v1h-1zM182 258h1v1h-1zM182 261h1v1h-1zM182 264h1v1h-1zM182 267h1v1h-1zM182 270h1v1h-1zM182 273h1v1h-1zM182 276h1v1h-1zM182 279h1v1h-1zM182 282h1v1h-1zM182 285h1v1h-1zM182 288h1v1h-1zM182 291h1v1h-1zM182 294h1v1h-1zM182 297h1v1h-1zM182 300h1v1h-1zM182 303h1v1h-1zM182 306h1v1h-1zM182 309h1v1h-1zM182 312h1v1h-1zM182 315h1v1h-1zM182 318h1v1h-1zM182 321h1v1h-1zM182 324h1v1h-1zM182 327h1v1h-1zM182 330h1v1h-1zM182 333h1v1h-1zM182 336h1v1h-1zM182 339h1v1h-1zM182 342h1v1h-1zM182 345h1v1h-1zM182 348h1v1h-1zM182 351h1v1h-1zM182 354h1v1h-1zM182 357h1v1h-1zM182 360h1v1h-1zM182 363h1v1h-1zM182 366h1v1h-1zM182 369h1v1h-1zM182 372h1v1h-1zM182 375h1v1h-1zM182 378h1v1h-1zM182 381h1v1h-1zM182 384h1v1h-1zM182 387h1v1h-1zM182 390h1v1h-1zM182 393h1v1h-1zM182 396h1v1h-1zM182 399h1v1h-1zM182 402h1v1h-1zM182 405h1v1h-1zM182 408h1v1h-1zM182 411h1v1h-1zM182 414h1v1h-1zM182 417h1v1h-1zM182 420h1v1h-1zM182 423h1v1h-1zM182 426h1v1h-1zM182 429h1v1h-1zM182 432h1v1h-1zM182 435h1v1h-1zM182 438h1v1h-1zM182 441h1v1h-1zM182 444h1v1h-1zM182 447h1v1h-1zM182 450h1v1h-1zM182 453h1v1h-1zM182 456h1v1h-1zM182 459h1v1h-1zM182 462h1v1h-1zM182 465h1v1h-1zM182 468h1v1h-1zM182 471h1v1h-1zM182 474h1v1h-1zM182 477h1v1h-1zM182 480h1v1h-1zM182 483h1v1h-1zM182 486h1v1h-1zM182 489h1v1h-1zM182 492h1v1h-1zM182 495h1v1h-1zM182 498h1v1h-1zM182 501h1v1h-1zM182 504h1v1h-1zM182 507h1v1h-1zM182 510h1v1h-1zM182 513h1v1h-1zM182 516h1v1h-1zM182 519h1v1h-1zM182 522h1v1h-1zM182 525h1v1h-1zM182 528h1v1h-1zM182 531h1v1h-1zM182 534h1v1h-1zM182 537h1v1h-1zM182 540h1v1h-1zM182 543h1v1h-1zM182 546h1v1h-1zM182 549h1v1h-1zM182 552h1v1h-1zM182 555h1v1h-1zM182 558h1v1h-1zM182 561h1v1h-1zM182 564h1v1h-1zM182 567h1v1h-1zM182 570h1v1h-1zM182 573h1v1h-1zM182 576h1v1h-1zM182 579h1v1h-1zM182 582h1v1h-1zM182 585h1v1h-1zM182 588h1v1h-1zM182 591h1v1h-1zM182 594h1v1h-1zM182 597h1v1h-1zM182 600h1v1h-1zM182 603h1v1h-1zM182 606h1v1h-1zM182 609h1v1h-1zM182 612h1v1h-1zM182 615h1v1h-1zM182 618h1v1h-1zM182 621h1v1h-1zM182 624h1v1h-1zM182 627h1v1h-1zM182 630h1v1h-1zM182 633h1v1h-1zM182 636h1v1h-1zM182 639h1v1h-1zM182 642h1v1h-1zM238 21h1v1h-1zM238 24h1v1h-1zM238 27h1v1h-1zM238 30h1v1h-1zM238 33h1v1h-1zM238 36h1v1h-1zM238 39h1v1h-1zM238 42h1v1h-1zM238 45h1v1h-1zM238 48h1v1h-1zM238 51h1v1h-1zM238 54h1v1h-1zM238 57h1v1h-1zM238 60h1v1h-1zM238 63h1v1h-1zM238 66h1v1h-1zM238 69h1v1h-1zM238 72h1v1h-1zM238 75h1v1h-1zM238 78h1v1h-1zM238 81h1v1h-1zM238 84h1v1h-1zM238 87h1v1h-1zM238 90h1v1h-1zM238 93h1v1h-1zM238 96h1v1h-1zM238 99h1v1h-1zM238 102h1v1h-1zM238 105h1v1h-1zM238 108h1v1h-1zM238 111h1v1h-1zM238 114h1v1h-1zM238 117h1v1h-1zM238 120h1v1h-1zM238 123h1v1h-1zM238 126h1v1h-1zM238 129h1v1h-1zM238 132h1v1h-1zM238 135h1v1h-1zM238 138h1v1h-1zM238 141h1v1h-1zM238 144h1v1h-1zM238 147h1v1h-1zM238 150h1v1h-1zM238 153h1v1h-1zM238 156h1v1h-1zM238 159h1v1h-1zM238 162h1v1h-1zM238 165h1v1h-1zM238 168h1v1h-1zM238 171h1v1h-1zM238 174h1v1h-1zM238 177h1v1h-1zM238 180h1v1h-1zM238 183h1v1h-1zM238 186h1v1h-1zM238 189h1v1h-1zM238 192h1v1h-1zM238 195h1v1h-1zM238 198h1v1h-1zM238 201h1v1h-1zM238 204h1v1h-1zM238 207h1v1h-1zM238 210h1v1h-1zM238 213h1v1h-1zM238 216h1v1h-1zM238 219h1v1h-1zM238 222h1v1h-1zM238 225h1v1h-1zM238 228h1v1h-1zM238 231h1v1h-1zM238 234h1v1h-1zM238 237h1v1h-1zM238 240h1v1h-1zM238 243h1v1h-1zM238 246h1v1h-1zM238 249h1v1h-1zM238 252h1v1h-1zM238 255h1v1h-1zM238 258h1v1h-1zM238 261h1v1h-1zM238 264h1v1h-1zM238 267h1v1h-1zM238 270h1v1h-1zM238 273h1v1h-1zM238 276h1v1h-1zM238 279h1v1h-1zM238 282h1v1h-1zM238 285h1v1h-1zM238 288h1v1h-1zM238 291h1v1h-1zM238 294h1v1h-1zM238 297h1v1h-1zM238 300h1v1h-1zM238 303h1v1h-1zM238 306h1v1h-1zM238 309h1v1h-1zM238 312h1v1h-1zM238 315h1v1h-1zM238 318h1v1h-1zM238 321h1v1h-1zM238 324h1v1h-1zM238 327h1v1h-1zM238 330h1v1h-1zM238 333h1v1h-1zM238 336h1v1h-1zM238 339h1v1h-1zM238 342h1v1h-1zM238 345h1v1h-1zM238 348h1v1h-1zM238 351h1v1h-1zM238 354h1v1h-1zM238 357h1v1h-1zM238 360h1v1h-1zM238 363h1v1h-1zM238 366h1v1h-1zM238 369h1v1h-1zM238 372h1v1h-1zM238 375h1v1h-1zM238 378h1v1h-1zM238 381h1v1h-1zM238 384h1v1h-1zM238 387h1v1h-1zM238 390h1v1h-1zM238 393h1v1h-1zM238 396h1v1h-1zM238 399h1v1h-1zM238 402h1v1h-1zM238 405h1v1h-1zM238 408h1v1h-1zM238 411h1v1h-1zM238 414h1v1h-1zM238 417h1v1h-1zM238 420h1v1h-1zM238 423h1v1h-1zM238 426h1v1h-1zM238 429h1v1h-1zM238 432h1v1h-1zM238 435h1v1h-1zM238 438h1v1h-1zM238 441h1v1h-1zM238 444h1v1h-1zM238 447h1v1h-1zM238 450h1v1h-1zM238 453h1v1h-1zM238 456h1v1h-1zM238 459h1v1h-1zM238 462h1v1h-1zM238 465h1v1h-1zM238 468h1v1h-1zM238 471h1v1h-1zM238 474h1v1h-1zM238 477h1v1h-1zM238 480h1v1h-1zM238 483h1v1h-1zM238 486h1v1h-1zM238 489h1v1h-1zM238 492h1v1h-1zM238 495h1v1h-1zM238 498h1v1h-1zM238 501h1v1h-1zM238 504h1v1h-1zM238 507h1v1h-1zM238 510h1v1h-1zM238 513h1v1h-1zM238 516h1v1h-1zM238 519h1v1h-1zM238 522h1v1h-1zM238 525h1v1h-1zM238 528h1v1h-1zM238 531h1v1h-1zM238 534h1v1h-1zM238 537h1v1h-1zM238 540h1v1h-1zM238 543h1v1h-1zM238 546h1v1h-1zM238 549h1v1h-1zM238 552h1v1h-1zM238 555h1v1h-1zM238 558h1v1h-1zM238 561h1v1h-1zM238 564h1v1h-1zM238 567h1v1h-1zM238 570h1v1h-1zM238 573h1v1h-1zM238 576h1v1h-1zM238 579h1v1h-1zM238 582h1v1h-1zM238 585h1v1h-1zM238 588h1v1h-1zM238 591h1v1h-1zM238 594h1v1h-1zM238 597h1v1h-1zM238 600h1v1h-1zM238 603h1v1h-1zM238 606h1v1h-1zM238 609h1v1h-1zM238 612h1v1h-1zM238 615h1v1h-1zM238 618h1v1h-1zM238 621h1v1h-1zM238 624h1v1h-1zM238 627h1v1h-1zM238 630h1v1h-1zM238 633h1v1h-1zM238 636h1v1h-1zM238 639h1v1h-1zM238 642h1v1h-1zM294 21h1v1h-1zM294 24h1v1h-1zM294 27h1v1h-1zM294 30h1v1h-1zM294 33h1v1h-1zM294 36h1v1h-1zM294 39h1v1h-1zM294 42h1v1h-1zM294 45h1v1h-1zM294 48h1v1h-1zM294 51h1v1h-1zM294 54h1v1h-1zM294 57h1v1h-1zM294 60h1v1h-1zM294 63h1v1h-1zM294 66h1v1h-1zM294 69h1v1h-1zM294 72h1v1h-1zM294 75h1v1h-1zM294 78h1v1h-1zM294 81h1v1h-1zM294 84h1v1h-1zM294 87h1v1h-1zM294 90h1v1h-1zM294 93h1v1h-1zM294 96h1v1h-1zM294 99h1v1h-1zM294 102h1v1h-1zM294 105h1v1h-1zM294 108h1v1h-1zM294 111h1v1h-1zM294 114h1v1h-1zM294 117h1v1h-1zM294 120h1v1h-1zM294 123h1v1h-1zM294 126h1v1h-1zM294 129h1v1h-1zM294 132h1v1h-1zM294 135h1v1h-1zM294 138h1v1h-1zM294 141h1v1h-1zM294 144h1v1h-1zM294 147h1v1h-1zM294 150h1v1h-1zM294 153h1v1h-1zM294 156h1v1h-1zM294 159h1v1h-1zM294 162h1v1h-1zM294 165h1v1h-1zM294 168h1v1h-1zM294 171h1v1h-1zM294 174h1v1h-1zM294 177h1v1h-1zM294 180h1v1h-1zM294 183h1v1h-1zM294 186h1v1h-1zM294 189h1v1h-1zM294 192h1v1h-1zM294 195h1v1h-1zM294 198h1v1h-1zM294 201h1v1h-1zM294 204h1v1h-1zM294 207h1v1h-1zM294 210h1v1h-1zM294 213h1v1h-1zM294 216h1v1h-1zM294 219h1v1h-1zM294 222h1v1h-1zM294 225h1v1h-1zM294 228h1v1h-1zM294 231h1v1h-1zM294 234h1v1h-1zM294 237h1v1h-1zM294 240h1v1h-1zM294 243h1v1h-1zM294 246h1v1h-1zM294 249h1v1h-1zM294 252h1v1h-1zM294 255h1v1h-1zM294 258h1v1h-1zM294 261h1v1h-1zM294 264h1v1h-1zM294 267h1v1h-1zM294 270h1v1h-1zM294 273h1v1h-1zM294 276h1v1h-1zM294 279h1v1h-1zM294 282h1v1h-1zM294 285h1v1h-1zM294 288h1v1h-1zM294 291h1v1h-1zM294 294h1v1h-1zM294 297h1v1h-1zM294 300h1v1h-1zM294 303h1v1h-1zM294 306h1v1h-1zM294 309h1v1h-1zM294 312h1v1h-1zM294 315h1v1h-1zM294 318h1v1h-1zM294 321h1v1h-1zM294 324h1v1h-1zM294 327h1v1h-1zM294 330h1v1h-1zM294 333h1v1h-1zM294 336h1v1h-1zM294 339h1v1h-1zM294 342h1v1h-1zM294 345h1v1h-1zM294 348h1v1h-1zM294 351h1v1h-1zM294 354h1v1h-1zM294 357h1v1h-1zM294 360h1v1h-1zM294 363h1v1h-1zM294 366h1v1h-1zM294 369h1v1h-1zM294 372h1v1h-1zM294 375h1v1h-1zM294 378h1v1h-1zM294 381h1v1h-1zM294 384h1v1h-1zM294 387h1v1h-1zM294 390h1v1h-1zM294 393h1v1h-1zM294 396h1v1h-1zM294 399h1v1h-1zM294 402h1v1h-1zM294 405h1v1h-1zM294 408h1v1h-1zM294 411h1v1h-1zM294 414h1v1h-1zM294 417h1v1h-1zM294 420h1v1h-1zM294 423h1v1h-1zM294 426h1v1h-1zM294 429h1v1h-1zM294 432h1v1h-1zM294 435h1v1h-1zM294 438h1v1h-1zM294 441h1v1h-1zM294 444h1v1h-1zM294 447h1v1h-1zM294 450h1v1h-1zM294 453h1v1h-1zM294 456h1v1h-1zM294 459h1v1h-1zM294 462h1v1h-1zM294 465h1v1h-1zM294 468h1v1h-1zM294 471h1v1h-1zM294 474h1v1h-1zM294 477h1v1h-1zM294 480h1v1h-1zM294 483h1v1h-1zM294 486h1v1h-1zM294 489h1v1h-1zM294 492h1v1h-1zM294 495h1v1h-1zM294 498h1v1h-1zM294 501h1v1h-1zM294 504h1v1h-1zM294 507h1v1h-1zM294 510h1v1h-1zM294 513h1v1h-1zM294 516h1v1h-1zM294 519h1v1h-1zM294 522h1v1h-1zM294 525h1v1h-1zM294 528h1v1h-1zM294 531h1v1h-1zM294 534h1v1h-1zM294 537h1v1h-1zM294 540h1v1h-1zM294 543h1v1h-1zM294 546h1v1h-1zM294 549h1v1h-1zM294 552h1v1h-1zM294 555h1v1h-1zM294 558h1v1h-1zM294 561h1v1h-1zM294 564h1v1h-1zM294 567h1v1h-1zM294 570h1v1h-1zM294 573h1v1h-1zM294 576h1v1h-1zM294 579h1v1h-1zM294 582h1v1h-1zM294 585h1v1h-1zM294 588h1v1h-1zM294 591h1v1h-1zM294 594h1v1h-1zM294 597h1v1h-1zM294 600h1v1h-1zM294 603h1v1h-1zM294 606h1v1h-1zM294 609h1v1h-1zM294 612h1v1h-1zM294 615h1v1h-1zM294 618h1v1h-1zM294 621h1v1h-1zM294 624h1v1h-1zM294 627h1v1h-1zM294 630h1v1h-1zM294 633h1v1h-1zM294 636h1v1h-1zM294 639h1v1h-1zM294 642h1v1h-1zM350 21h1v1h-1zM350 24h1v1h-1zM350 27h1v1h-1zM350 30h1v1h-1zM350 33h1v1h-1zM350 36h1v1h-1zM350 39h1v1h-1zM350 42h1v1h-1zM350 45h1v1h-1zM350 48h1v1h-1zM350 51h1v1h-1zM350 54h1v1h-1zM350 57h1v1h-1zM350 60h1v1h-1zM350 63h1v1h-1zM350 66h1v1h-1zM350 69h1v1h-1zM350 72h1v1h-1zM350 75h1v1h-1zM350 78h1v1h-1zM350 81h1v1h-1zM350 84h1v1h-1zM350 87h1v1h-1zM350 90h1v1h-1zM350 93h1v1h-1zM350 96h1v1h-1zM350 99h1v1h-1zM350 102h1v1h-1zM350 105h1v1h-1zM350 108h1v1h-1zM350 111h1v1h-1zM350 114h1v1h-1zM350 117h1v1h-1zM350 120h1v1h-1zM350 123h1v1h-1zM350 126h1v1h-1zM350 129h1v1h-1zM350 132h1v1h-1zM350 135h1v1h-1zM350 138h1v1h-1zM350 141h1v1h-1zM350 144h1v1h-1zM350 147h1v1h-1zM350 150h1v1h-1zM350 153h1v1h-1zM350 156h1v1h-1zM350 159h1v1h-1zM350 162h1v1h-1zM350 165h1v1h-1zM350 168h1v1h-1zM350 171h1v1h-1zM350 174h1v1h-1zM350 177h1v1h-1zM350 180h1v1h-1zM350 183h1v1h-1zM350 186h1v1h-1zM350 189h1v1h-1zM350 192h1v1h-1zM350 195h1v1h-1zM350 198h1v1h-1zM350 201h1v1h-1zM350 204h1v1h-1zM350 207h1v1h-1zM350 210h1v1h-1zM350 213h1v1h-1zM350 216h1v1h-1zM350 219h1v1h-1zM350 222h1v1h-1zM350 225h1v1h-1zM350 228h1v1h-1zM350 231h1v1h-1zM350 234h1v1h-1zM350 237h1v1h-1zM350 240h1v1h-1zM350 243h1v1h-1zM350 246h1v1h-1zM350 249h1v1h-1zM350 252h1v1h-1zM350 255h1v1h-1zM350 258h1v1h-1zM350 261h1v1h-1zM350 264h1v1h-1zM350 267h1v1h-1zM350 270h1v1h-1zM350 273h1v1h-1zM350 276h1v1h-1zM350 279h1v1h-1zM350 282h1v1h-1zM350 285h1v1h-1zM350 288h1v1h-1zM350 291h1v1h-1zM350 294h1v1h-1zM350 297h1v1h-1zM350 300h1v1h-1zM350 303h1v1h-1zM350 306h1v1h-1zM350 309h1v1h-1zM350 312h1v1h-1zM350 315h1v1h-1zM350 318h1v1h-1zM350 321h1v1h-1zM350 324h1v1h-1zM350 327h1v1h-1zM350 330h1v1h-1zM350 333h1v1h-1zM350 336h1v1h-1zM350 339h1v1h-1zM350 342h1v1h-1zM350 345h1v1h-1zM350 348h1v1h-1zM350 351h1v1h-1zM350 354h1v1h-1zM350 357h1v1h-1zM350 360h1v1h-1zM350 363h1v1h-1zM350 366h1v1h-1zM350 369h1v1h-1zM350 372h1v1h-1zM350 375h1v1h-1zM350 378h1v1h-1zM350 381h1v1h-1zM350 384h1v1h-1zM350 387h1v1h-1zM350 390h1v1h-1zM350 393h1v1h-1zM350 396h1v1h-1zM350 399h1v1h-1zM350 402h1v1h-1zM350 405h1v1h-1zM350 408h1v1h-1zM350 411h1v1h-1zM350 414h1v1h-1zM350 417h1v1h-1zM350 420h1v1h-1zM350 423h1v1h-1zM350 426h1v1h-1zM350 429h1v1h-1zM350 432h1v1h-1zM350 435h1v1h-1zM350 438h1v1h-1zM350 441h1v1h-1zM350 444h1v1h-1zM350 447h1v1h-1zM350 450h1v1h-1zM350 453h1v1h-1zM350 456h1v1h-1zM350 459h1v1h-1zM350 462h1v1h-1zM350 465h1v1h-1zM350 468h1v1h-1zM350 471h1v1h-1zM350 474h1v1h-1zM350 477h1v1h-1zM350 480h1v1h-1zM350 483h1v1h-1zM350 486h1v1h-1zM350 489h1v1h-1zM350 492h1v1h-1zM350 495h1v1h-1zM350 498h1v1h-1zM350 501h1v1h-1zM350 504h1v1h-1zM350 507h1v1h-1zM350 510h1v1h-1zM350 513h1v1h-1zM350 516h1v1h-1zM350 519h1v1h-1zM350 522h1v1h-1zM350 525h1v1h-1zM350 528h1v1h-1zM350 531h1v1h-1zM350 534h1v1h-1zM350 537h1v1h-1zM350 540h1v1h-1zM350 543h1v1h-1zM350 546h1v1h-1zM350 549h1v1h-1zM350 552h1v1h-1zM350 555h1v1h-1zM350 558h1v1h-1zM350 561h1v1h-1zM350 564h1v1h-1zM350 567h1v1h-1zM350 570h1v1h-1zM350 573h1v1h-1zM350 576h1v1h-1zM350 579h1v1h-1zM350 582h1v1h-1zM350 585h1v1h-1zM350 588h1v1h-1zM350 591h1v1h-1zM350 594h1v1h-1zM350 597h1v1h-1zM350 600h1v1h-1zM350 603h1v1h-1zM350 606h1v1h-1zM350 609h1v1h-1zM350 612h1v1h-1zM350 615h1v1h-1zM350 618h1v1h-1zM350 621h1v1h-1zM350 624h1v1h-1zM350 627h1v1h-1zM350 630h1v1h-1zM350 633h1v1h-1zM350 636h1v1h-1zM350 639h1v1h-1zM350 642h1v1h-1zM406 21h1v1h-1zM406 24h1v1h-1zM406 27h1v1h-1zM406 30h1v1h-1zM406 33h1v1h-1zM406 36h1v1h-1zM406 39h1v1h-1zM406 42h1v1h-1zM406 45h1v1h-1zM406 48h1v1h-1zM406 51h1v1h-1zM406 54h1v1h-1zM406 57h1v1h-1zM406 60h1v1h-1zM406 63h1v1h-1zM406 66h1v1h-1zM406 69h1v1h-1zM406 72h1v1h-1zM406 75h1v1h-1zM406 78h1v1h-1zM406 81h1v1h-1zM406 84h1v1h-1zM406 87h1v1h-1zM406 90h1v1h-1zM406 93h1v1h-1zM406 96h1v1h-1zM406 99h1v1h-1zM406 102h1v1h-1zM406 105h1v1h-1zM406 108h1v1h-1zM406 111h1v1h-1zM406 114h1v1h-1zM406 117h1v1h-1zM406 120h1v1h-1zM406 123h1v1h-1zM406 126h1v1h-1zM406 129h1v1h-1zM406 132h1v1h-1zM406 135h1v1h-1zM406 138h1v1h-1zM406 141h1v1h-1zM406 144h1v1h-1zM406 147h1v1h-1zM406 150h1v1h-1zM406 153h1v1h-1zM406 156h1v1h-1zM406 159h1v1h-1zM406 162h1v1h-1zM406 165h1v1h-1zM406 168h1v1h-1zM406 171h1v1h-1zM406 174h1v1h-1zM406 177h1v1h-1zM406 180h1v1h-1zM406 183h1v1h-1zM406 186h1v1h-1zM406 189h1v1h-1zM406 192h1v1h-1zM406 195h1v1h-1zM406 198h1v1h-1zM406 201h1v1h-1zM406 204h1v1h-1zM406 207h1v1h-1zM406 210h1v1h-1zM406 213h1v1h-1zM406 216h1v1h-1zM406 219h1v1h-1zM406 222h1v1h-1zM406 225h1v1h-1zM406 228h1v1h-1zM406 231h1v1h-1zM406 234h1v1h-1zM406 237h1v1h-1zM406 240h1v1h-1zM406 243h1v1h-1zM406 246h1v1h-1zM406 249h1v1h-1zM406 252h1v1h-1zM406 255h1v1h-1zM406 258h1v1h-1zM406 261h1v1h-1zM406 264h1v1h-1zM406 267h1v1h-1zM406 270h1v1h-1zM406 273h1v1h-1zM406 276h1v1h-1zM406 279h1v1h-1zM406 282h1v1h-1zM406 285h1v1h-1zM406 288h1v1h-1zM406 291h1v1h-1zM406 294h1v1h-1zM406 297h1v1h-1zM406 300h1v1h-1zM406 303h1v1h-1zM406 306h1v1h-1zM406 309h1v1h-1zM406 312h1v1h-1zM406 315h1v1h-1zM406 318h1v1h-1zM406 321h1v1h-1zM406 324h1v1h-1zM406 327h1v1h-1zM406 330h1v1h-1zM406 333h1v1h-1zM406 336h1v1h-1zM406 339h1v1h-1zM406 342h1v1h-1zM406 345h1v1h-1zM406 348h1v1h-1zM406 351h1v1h-1zM406 354h1v1h-1zM406 357h1v1h-1zM406 360h1v1h-1zM406 363h1v1h-1zM406 366h1v1h-1zM406 369h1v1h-1zM406 372h1v1h-1zM406 375h1v1h-1zM406 378h1v1h-1zM406 381h1v1h-1zM406 384h1v1h-1zM406 387h1v1h-1zM406 390h1v1h-1zM406 393h1v1h-1zM406 396h1v1h-1zM406 399h1v1h-1zM406 402h1v1h-1zM406 405h1v1h-1zM406 408h1v1h-1zM406 411h1v1h-1zM406 414h1v1h-1zM406 417h1v1h-1zM406 420h1v1h-1zM406 423h1v1h-1zM406 426h1v1h-1zM406 429h1v1h-1zM406 432h1v1h-1zM406 435h1v1h-1zM406 438h1v1h-1zM406 441h1v1h-1zM406 444h1v1h-1zM406 447h1v1h-1zM406 450h1v1h-1zM406 453h1v1h-1zM406 456h1v1h-1zM406 459h1v1h-1zM406 462h1v1h-1zM406 465h1v1h-1zM406 468h1v1h-1zM406 471h1v1h-1zM406 474h1v1h-1zM406 477h1v1h-1zM406 480h1v1h-1zM406 483h1v1h-1zM406 486h1v1h-1zM406 489h1v1h-1zM406 492h1v1h-1zM406 495h1v1h-1zM406 498h1v1h-1zM406 501h1v1h-1zM406 504h1v1h-1zM406 507h1v1h-1zM406 510h1v1h-1zM406 513h1v1h-1zM406 516h1v1h-1zM406 519h1v1h-1zM406 522h1v1h-1zM406 525h1v1h-1zM406 528h1v1h-1zM406 531h1v1h-1zM406 534h1v1h-1zM406 537h1v1h-1zM406 540h1v1h-1zM406 543h1v1h-1zM406 546h1v1h-1zM406 549h1v1h-1zM406 552h1v1h-1zM406 555h1v1h-1zM406 558h1v1h-1zM406 561h1v1h-1zM406 564h1v1h-1zM406 567h1v1h-1zM406 570h1v1h-1zM406 573h1v1h-1zM406 576h1v1h-1zM406 579h1v1h-1zM406 582h1v1h-1zM406 585h1v1h-1zM406 588h1v1h-1zM406 591h1v1h-1zM406 594h1v1h-1zM406 597h1v1h-1zM406 600h1v1h-1zM406 603h1v1h-1zM406 606h1v1h-1zM406 609h1v1h-1zM406 612h1v1h-1zM406 615h1v1h-1zM406 618h1v1h-1zM406 621h1v1h-1zM406 624h1v1h-1zM406 627h1v1h-1zM406 630h1v1h-1zM406 633h1v1h-1zM406 636h1v1h-1zM406 639h1v1h-1zM406 642h1v1h-1z" fill="#a0a0a0" shape-rendering="crispEdges"/>
<path d="M145.9 288.9L164.6 299.0M145.9 288.9l1.8 -8.8M148.5 290.3l1.0 -5.2M117.6 314.4L137.0 323.3M117.6 314.4l1.2 -8.9M150.4 309.6L159.3 329.0M150.4 309.6l6.7 -6.0M151.7 312.3l6.7 -6.0M152.9 315.0l4.0 -3.5M173.2 315.4L193.4 322.1M173.2 315.4l0.2 -9.0M176.0 316.4l0.1 -5.3M230.0 313.7L248.5 324.2M230.0 313.7l1.9 -8.8M285.3 365.3L305.4 372.3M285.3 365.3l0.4 -9.0M341.8 373.1L360.7 363.2M341.8 373.1l-6.3 -6.4M399.4 361.7L414.8 376.5M399.4 361.7l4.1 -8.0M117.3 390.1L137.3 397.4M117.3 390.1l0.5 -9.0M144.9 391.6L165.8 395.8M144.9 391.6l-0.9 -9.0M172.7 392.7L194.0 394.4M172.7 392.7l-1.9 -8.8M200.8 392.0L221.9 395.2M200.8 392.0l-1.3 -8.9M203.8 392.5l-0.8 -5.2M228.9 391.3L249.7 396.1M228.9 391.3l-0.6 -9.0M257.2 390.5L277.4 397.0M257.2 390.5l0.1 -9.0M285.2 390.3L305.4 397.2M288.1 391.3l0.2 -5.3M313.9 388.9L332.6 399.0M313.9 388.9l1.8 -8.8M316.5 390.3l1.0 -5.2M341.1 390.8L361.6 396.7M344.0 391.6l-0.1 -5.3M370.9 387.3L387.4 400.8M370.9 387.3l3.5 -8.3M397.7 389.2L416.8 398.6M400.4 390.5l0.9 -5.2M426.7 387.5L443.6 400.5M429.1 389.4l1.8 -5.0M116.7 418.2L138.0 418.9M116.7 418.2l-2.3 -8.7M119.7 418.3l-1.4 -5.1M144.7 418.3L166.0 418.7M144.7 418.3l-2.5 -8.7M147.7 418.4l-1.5 -5.1M172.7 418.2L194.0 418.9M172.7 418.2l-2.3 -8.7M175.7 418.3l-1.4 -5.1M200.8 417.5L221.9 419.7M200.8 417.5l-1.7 -8.8M203.7 417.8l-1.0 -5.2M229.0 416.3L249.7 421.1M229.0 416.3l-0.6 -9.0M231.9 417.0l-0.4 -5.3M257.2 415.3L277.4 422.2M257.2 415.3l0.3 -9.0M285.7 414.1L304.8 423.6M285.7 414.1l1.5 -8.9M314.0 413.7L332.5 424.2M316.6 415.2l1.1 -5.2M343.5 411.7L358.8 426.5M345.6 413.8l2.4 -4.7M369.7 414.3L388.9 423.5M369.7 414.3l1.3 -8.9M397.8 413.9L416.7 423.9M400.5 415.3l1.0 -5.2M425.4 414.8L445.2 422.8M425.4 414.8l0.8 -9.0M117.1 440.6L137.5 446.9M117.1 440.6l0.0 -9.0M120.0 441.5l0.0 -5.3M145.1 440.6L165.5 446.9M145.1 440.6l0.0 -9.0M148.0 441.5l0.0 -5.3M173.1 440.6L193.5 446.9M173.1 440.6l0.0 -9.0M201.4 439.9L221.2 447.8M201.4 439.9l0.8 -9.0M229.7 439.2L248.8 448.5M229.7 439.2l1.4 -8.9M257.9 438.8L276.6 449.0M257.9 438.8l1.8 -8.8M285.9 438.7L304.6 449.1M285.9 438.7l1.9 -8.8M313.9 438.7L332.6 449.1M313.9 438.7l1.9 -8.8M341.3 440.2L361.3 447.4M344.1 441.2l0.2 -5.3M370.3 438.1L388.1 449.8M370.3 438.1l2.6 -8.6M398.3 438.2L416.1 449.8M398.3 438.2l2.5 -8.7M427.8 436.3L442.3 451.9M429.9 438.5l2.7 -4.6M117.8 463.9L136.7 473.9M117.8 463.9l1.7 -8.8M120.5 465.3l1.0 -5.2M145.8 463.9L164.7 473.9M145.8 463.9l1.7 -8.8M148.5 465.3l1.0 -5.2M173.8 463.9L192.7 473.9M173.8 463.9l1.7 -8.8M176.5 465.3l1.0 -5.2M201.8 464.1L220.7 473.7M201.8 464.1l1.6 -8.9M204.4 465.4l0.9 -5.2M229.7 464.3L248.9 473.5M229.7 464.3l1.4 -8.9M257.8 463.9L276.7 473.9M257.8 463.9l1.7 -8.8M285.8 463.9L304.7 473.9M285.8 463.9l1.7 -8.8M288.5 465.3l1.0 -5.2M313.8 464.1L332.7 473.7M313.8 464.1l1.6 -8.9M316.4 465.4l0.9 -5.2M341.7 464.2L360.8 473.5M341.7 464.2l1.4 -8.9M344.4 465.5l0.8 -5.2M369.7 464.1L388.8 473.6M369.7 464.1l1.5 -8.9M397.7 464.1L416.8 473.6M397.7 464.1l1.5 -8.9M425.7 464.2L444.8 473.5M425.7 464.2l1.4 -8.9M428.4 465.5l0.8 -5.2M118.1 488.5L136.4 499.4M118.1 488.5l2.2 -8.7M120.7 490.0l1.3 -5.1M146.1 488.5L164.4 499.4M146.1 488.5l2.2 -8.7M148.7 490.0l1.3 -5.1M174.2 488.3L192.3 499.6M174.2 488.3l2.3 -8.7M176.7 489.9l1.4 -5.1M202.6 487.7L219.8 500.3M202.6 487.7l2.9 -8.5M205.0 489.5l1.7 -5.0M230.9 487.3L247.4 500.7M230.9 487.3l3.4 -8.4M233.2 489.2l2.0 -4.9M259.0 487.2L275.3 500.9M259.0 487.2l3.5 -8.3M261.3 489.1l2.1 -4.9M287.0 487.2L303.3 500.9M287.0 487.2l3.5 -8.3M289.3 489.1l2.1 -4.9M314.9 487.3L331.4 500.8M314.9 487.3l3.5 -8.3M317.3 489.2l2.0 -4.9M343.0 487.2L359.3 500.9M343.0 487.2l3.5 -8.3M345.3 489.1l2.1 -4.9M371.0 487.2L387.3 500.9M371.0 487.2l3.5 -8.3M373.3 489.1l2.1 -4.9M399.3 486.9L415.0 501.3M399.3 486.9l3.9 -8.1M427.0 487.2L443.3 500.9M427.0 487.2l3.5 -8.3M429.3 489.1l2.1 -4.9M120.3 510.9L133.7 527.4M120.3 510.9l5.0 -7.5M122.2 513.2l3.0 -4.4M148.3 510.9L161.7 527.4M148.3 510.9l5.0 -7.5M150.2 513.2l3.0 -4.4M176.3 510.9L189.7 527.4M176.3 510.9l5.0 -7.5M178.2 513.2l3.0 -4.4M204.3 510.9L217.8 527.4M204.3 510.9l5.0 -7.5M206.2 513.3l2.9 -4.4M232.9 510.5L245.1 527.9M232.9 510.5l5.5 -7.1M234.6 512.9l3.3 -4.2M260.8 510.5L273.2 527.9M260.8 510.5l5.5 -7.1M262.5 513.0l5.5 -7.1M288.9 510.5L301.1 527.9M288.9 510.5l5.5 -7.1M290.6 512.9l5.5 -7.1M317.1 510.3L328.8 528.1M317.1 510.3l5.8 -6.9M318.8 512.8l5.8 -6.9M345.1 510.3L356.8 528.1M345.1 510.3l5.7 -6.9M346.8 512.8l5.7 -6.9M373.0 510.4L384.9 528.0M373.0 510.4l5.7 -7.0M374.7 512.9l5.7 -7.0M400.9 510.5L413.1 527.9M400.9 510.5l5.5 -7.1M402.6 512.9l5.5 -7.1M429.0 510.4L440.9 528.0M429.0 510.4l5.7 -7.0M430.7 512.9l5.7 -7.0M120.0 536.1L134.1 552.1M120.0 536.1l4.7 -7.7M122.0 538.4l2.8 -4.5M148.3 535.9L161.8 552.4M148.3 535.9l5.0 -7.5M150.2 538.3l2.9 -4.4M176.2 536.0L189.9 552.3M176.2 536.0l4.9 -7.5M178.1 538.3l2.9 -4.4M204.8 535.5L217.2 552.9M204.8 535.5l5.5 -7.1M206.6 538.0l3.2 -4.2M233.0 535.4L245.0 553.0M233.0 535.4l5.6 -7.0M234.7 537.9l5.6 -7.0M260.9 535.5L273.1 552.9M260.9 535.5l5.5 -7.1M262.6 537.9l5.5 -7.1M288.9 535.5L301.1 552.9M288.9 535.5l5.5 -7.1M290.6 537.9l5.5 -7.1M317.3 535.2L328.6 553.3M317.3 535.2l5.9 -6.8M318.9 537.7l5.9 -6.8M345.0 535.4L357.0 553.0M345.0 535.4l5.6 -7.0M346.7 537.9l5.6 -7.0M373.0 535.4L385.0 553.0M373.0 535.4l5.6 -7.0M374.7 537.9l5.6 -7.0M401.0 535.4L413.0 553.0M401.0 535.4l5.6 -7.0M402.7 537.9l5.6 -7.0M429.0 535.4L441.0 553.0M429.0 535.4l5.6 -7.0M430.7 537.9l5.6 -7.0M120.6 560.7L133.4 577.7M120.6 560.7l5.3 -7.3M122.4 563.1l3.1 -4.3M148.6 560.6L161.4 577.7M148.6 560.6l5.3 -7.3M150.4 563.0l3.1 -4.3M176.9 560.5L189.1 577.9M176.9 560.5l5.5 -7.1M178.6 562.9l3.3 -4.2M205.5 560.1L216.4 578.4M205.5 560.1l6.0 -6.7M207.0 562.7l3.5 -3.9M233.5 560.1L244.4 578.4M233.5 560.1l6.1 -6.6M235.0 562.6l3.6 -3.9M261.5 560.1L272.4 578.4M261.5 560.1l6.0 -6.7M263.0 562.7l3.5 -3.9M289.6 560.0L300.2 578.5M289.6 560.0l6.1 -6.6M291.1 562.6l3.6 -3.9M317.9 559.9L327.9 578.6M317.9 559.9l6.3 -6.4M319.3 562.5l3.7 -3.8M346.5 559.5L355.2 579.0M346.5 559.5l6.8 -5.9M347.7 562.3l4.0 -3.5M374.7 559.5L383.0 579.1M374.7 559.5l6.9 -5.8M375.8 562.2l4.1 -3.4M402.8 559.4L410.8 579.2M402.8 559.4l7.0 -5.7M404.0 562.2l4.1 -3.3M430.7 559.4L438.9 579.1M430.7 559.4l6.9 -5.7M431.9 562.2l4.1 -3.4M121.7 584.9L132.1 603.6M121.7 584.9l6.3 -6.5M149.8 584.9L160.0 603.6M149.8 584.9l6.3 -6.4M177.8 584.9L188.0 603.6M177.8 584.9l6.3 -6.4M206.1 584.7L215.6 603.8M206.1 584.7l6.5 -6.2M234.7 584.5L243.0 604.1M234.7 584.5l6.9 -5.8M263.1 584.3L270.5 604.3M263.1 584.3l7.2 -5.4M290.8 584.4L298.9 604.1M290.8 584.4l7.0 -5.7M319.1 584.3L326.5 604.3M319.1 584.3l7.1 -5.5M347.6 584.1L353.9 604.5M347.6 584.1l7.4 -5.1M375.6 584.1L381.9 604.5M375.6 584.1l7.4 -5.1M403.5 584.2L410.1 604.4M403.5 584.2l7.4 -5.2M431.4 584.2L438.1 604.4M431.4 584.2l7.3 -5.2M134.7 623.9L116.9 612.2M134.7 623.9l-2.5 8.6M160.9 626.0L147.0 609.8M160.9 626.0l-4.8 7.6M185.4 627.9L179.1 607.5M185.4 627.9l-7.5 5.0M214.7 627.3L205.5 608.1M214.7 627.3l-6.6 6.1M213.4 624.6l-3.9 3.6M241.3 627.9L235.2 607.5M241.3 627.9l-7.5 5.0M271.7 626.8L260.4 608.7M271.7 626.8l-5.9 6.8M298.9 627.3L289.3 608.2M298.9 627.3l-6.5 6.2M297.6 624.6l-3.8 3.7M327.3 627.1L316.9 608.4M327.3 627.1l-6.3 6.5M325.8 624.4l-3.7 3.8M356.2 626.5L343.8 609.1M356.2 626.5l-5.5 7.1M381.8 627.7L374.7 607.7M380.8 624.9l-4.3 3.1M413.1 625.7L398.7 610.0M413.1 625.7l-4.6 7.8M438.2 627.6L430.2 607.8M438.2 627.6l-7.0 5.7" stroke="#e48ae8" stroke-width="1" fill="none" stroke-linecap="round"/>
<text x="5" y="25" font-size="12" textLength="87" lengthAdjust="spacingAndGlyphs" fill="#f0f0f0">Step: 0.30 km</text><text x="41" y="75" font-size="12" textLength="51" lengthAdjust="spacingAndGlyphs" fill="#f0f0f0">6.60 km</text><text x="41" y="125" font-size="12" textLength="51" lengthAdjust="spacingAndGlyphs" fill="#f0f0f0">6.00 km</text><text x="41" y="175" font-size="12" textLength="51" lengthAdjust="spacingAndGlyphs" fill="#f0f0f0">5.40 km</text><text x="41" y="225" font-size="12" textLength="51" lengthAdjust="spacingAndGlyphs" fill="#f0f0f0">4.80 km</text><text x="41" y="275" font-size="12" textLength="51" lengthAdjust="spacingAndGlyphs" fill="#f0f0f0">4.20 km</text><text x="41" y="325" font-size="12" textLength="51" lengthAdjust="spacingAndGlyphs" fill="#f0f0f0">3.60 km</text><text x="41" y="375" font-size="12" textLength="51" lengthAdjust="spacingAndGlyphs" fill="#f0f0f0">3.00 km</text><text x="41" y="425" font-size="12" textLength="51" lengthAdjust="spacingAndGlyphs" fill="#f0f0f0">2.40 km</text><text x="41" y="475" font-size="12" textLength="51" lengthAdjust="spacingAndGlyphs" fill="#f0f0f0">1.80 km</text><text x="41" y="525" font-size="12" textLength="51" lengthAdjust="spacingAndGlyphs" fill="#f0f0f0">1.20 km</text><text x="41" y="575" font-size="12" textLength="51" lengthAdjust="spacingAndGlyphs" fill="#f0f0f0">0.60 km</text><text x="41" y="625" font-size="12" textLength="51" lengthAdjust="spacingAndGlyphs" fill="#f0f0f0">0.00 km</text><text x="267.5" y="15" font-size="12" textLength="24.5" lengthAdjust="spacingAndGlyphs" fill="#f0f0f0">VVP</text><text x="108.5" y="663" font-size="12" textLength="35" lengthAdjust="spacingAndGlyphs" fill="#f0f0f0">08:22</text><text x="136.5" y="678" font-size="12" textLength="35" lengthAdjust="spacingAndGlyphs" fill="#f0f0f0">08:32</text><text x="164.5" y="663" font-size="12" textLength="35" lengthAdjust="spacingAndGlyphs" fill="#f0f0f0">08:42</text><text x="192.5" y="678" font-size="12" textLength="35" lengthAdjust="spacingAndGlyphs" fill="#f0f0f0">08:52</text><text x="220.5" y="663" font-size="12" textLength="35" lengthAdjust="spacingAndGlyphs" fill="#f0f0f0">09:02</text><text x="248.5" y="678" font-size="12" textLength="35" lengthAdjust="spacingAndGlyphs" fill="#f0f0f0">09:12</text><text x="276.5" y="663" font-size="12" textLength="35" lengthAdjust="spacingAndGlyphs" fill="#f0f0f0">09:22</text><text x="304.5" y="678" font-size="12" textLength="35" lengthAdjust="spacingAndGlyphs" fill="#f0f0f0">09:32</text><text x="332.5" y="663" font-size="12" textLength="35" lengthAdjust="spacingAndGlyphs" fill="#f0f0f0">09:42</text><text x="360.5" y="678" font-size="12" textLength="35" lengthAdjust="spacingAndGlyphs" fill="#f0f0f0">09:52</text><text x="388.5" y="663" font-size="12" textLength="35" lengthAdjust="spacingAndGlyphs" fill="#f0f0f0">10:02</text><text x="416.5" y="678" font-size="12" textLength="35" lengthAdjust="spacingAndGlyphs" fill="#f0f0f0">10:12</text>
<text x="598.7" y="23" font-size="16" textLength="61.3" lengthAdjust="spacingAndGlyphs" fill="#000000">VVP (V)</text><text x="548.3" y="42" font-size="16" textLength="162.5" lengthAdjust="spacingAndGlyphs" fill="#000000">10:12 / 02-Nov-2025</text><text x="600.3" y="61" font-size="16" textLength="58.2" lengthAdjust="spacingAndGlyphs" fill="#000000">Kolkata</text><text x="522" y="79" font-size="12" textLength="44.5" lengthAdjust="spacingAndGlyphs" fill="#000000">Pdf File:</text><text x="614" y="79" font-size="12" textLength="41.5" lengthAdjust="spacingAndGlyphs" fill="#000000">30.vvp</text><text x="522" y="94" font-size="12" textLength="41" lengthAdjust="spacingAndGlyphs" fill="#000000">Range:</text><text x="614" y="94" font-size="12" textLength="89" lengthAdjust="spacingAndGlyphs" fill="#000000">0 km to 30 km</text><text x="522" y="109" font-size="12" textLength="78" lengthAdjust="spacingAndGlyphs" fill="#000000">Clutter Filter:</text><text x="614" y="109" font-size="12" textLength="74.5" lengthAdjust="spacingAndGlyphs" fill="#000000">IIRDoppler 7</text><text x="522" y="124" font-size="12" textLength="92" lengthAdjust="spacingAndGlyphs" fill="#000000">Time sampling:</text><text x="614" y="124" font-size="12" textLength="15.5" lengthAdjust="spacingAndGlyphs" fill="#000000">48</text><text x="522" y="139" font-size="12" textLength="24" lengthAdjust="spacingAndGlyphs" fill="#000000">PRF:</text><text x="614" y="139" font-size="12" textLength="98" lengthAdjust="spacingAndGlyphs" fill="#000000">600 Hz / 450 Hz</text><text x="522" y="154" font-size="12" textLength="53" lengthAdjust="spacingAndGlyphs" fill="#000000">Alg type:</text><text x="614" y="154" font-size="12" textLength="57" lengthAdjust="spacingAndGlyphs" fill="#000000">Complete</text><text x="522" y="169" font-size="12" textLength="58" lengthAdjust="spacingAndGlyphs" fill="#000000">Elevation:</text><text x="614" y="169" font-size="12" textLength="121" lengthAdjust="spacingAndGlyphs" fill="#000000">0.2 deg to 21.0 deg</text><text x="522" y="184" font-size="12" textLength="72" lengthAdjust="spacingAndGlyphs" fill="#000000">Second reg:</text><text x="614" y="184" font-size="12" textLength="16.5" lengthAdjust="spacingAndGlyphs" fill="#000000">On</text><text x="522.5" y="631" font-size="12" textLength="50.5" lengthAdjust="spacingAndGlyphs" fill="#000000">Rainbow</text><text x="574.3" y="630.5" font-size="10" textLength="9.2" lengthAdjust="spacingAndGlyphs" fill="#000000">®</text><text x="589" y="631" font-size="12" textLength="53.5" lengthAdjust="spacingAndGlyphs" fill="#000000">SELEX-SI</text>
</svg>
</body></html>
